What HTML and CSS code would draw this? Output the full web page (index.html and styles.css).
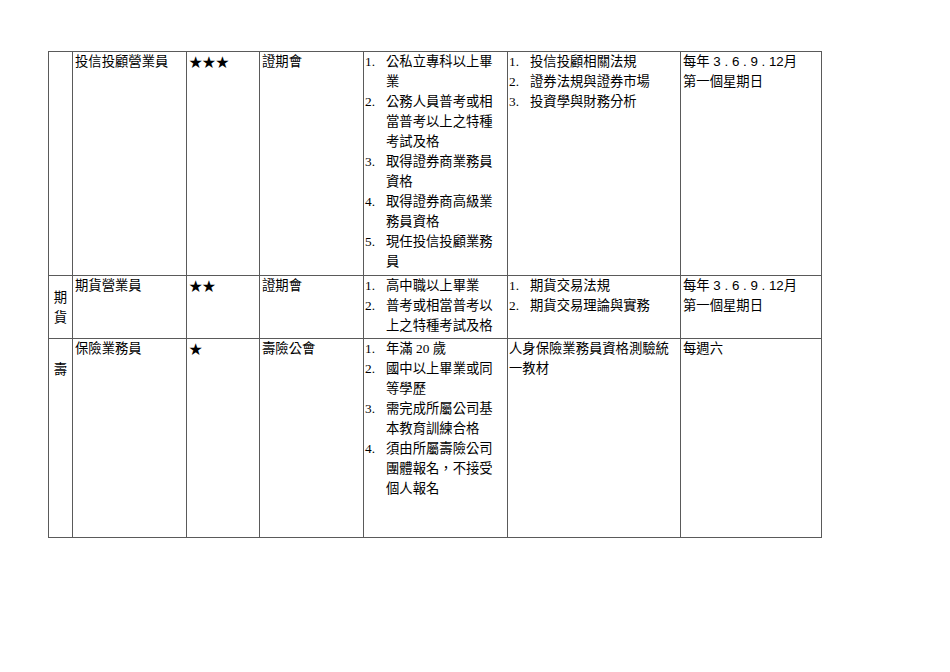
FILE: index.html
```html
<!DOCTYPE html>
<html lang="zh-Hant">
<head>
<meta charset="utf-8">
<title>證照一覽</title>
<link rel="stylesheet" href="styles.css">
</head>
<body>
<div class="page">
  <table class="grid">
    <colgroup>
      <col class="c-cat">
      <col class="c-name">
      <col class="c-star">
      <col class="c-org">
      <col class="c-req">
      <col class="c-subj">
      <col class="c-date">
    </colgroup>
    <tbody>
      <tr class="r1">
        <td class="cat"></td>
        <td class="cell">投信投顧營業員</td>
        <td class="cell stars">★★★</td>
        <td class="cell">證期會</td>
        <td class="cell list">
          <div class="item"><span class="n">1.</span><span class="t">公私立專科以上畢業</span></div>
          <div class="item"><span class="n">2.</span><span class="t">公務人員普考或相當普考以上之特種考試及格</span></div>
          <div class="item"><span class="n">3.</span><span class="t">取得證券商業務員資格</span></div>
          <div class="item"><span class="n">4.</span><span class="t">取得證券商高級業務員資格</span></div>
          <div class="item"><span class="n">5.</span><span class="t">現任投信投顧業務員</span></div>
        </td>
        <td class="cell list">
          <div class="item"><span class="n">1.</span><span class="t">投信投顧相關法規</span></div>
          <div class="item"><span class="n">2.</span><span class="t">證券法規與證券市場</span></div>
          <div class="item"><span class="n">3.</span><span class="t">投資學與財務分析</span></div>
        </td>
        <td class="cell date">每年<span class="num"> 3 . 6 . 9 . 12</span>月<br>第一個星期日</td>
      </tr>
      <tr class="r2">
        <td class="cat mid">期<br>貨</td>
        <td class="cell">期貨營業員</td>
        <td class="cell stars">★★</td>
        <td class="cell">證期會</td>
        <td class="cell list">
          <div class="item"><span class="n">1.</span><span class="t">高中職以上畢業</span></div>
          <div class="item"><span class="n">2.</span><span class="t">普考或相當普考以上之特種考試及格</span></div>
        </td>
        <td class="cell list">
          <div class="item"><span class="n">1.</span><span class="t">期貨交易法規</span></div>
          <div class="item"><span class="n">2.</span><span class="t">期貨交易理論與實務</span></div>
        </td>
        <td class="cell date">每年<span class="num"> 3 . 6 . 9 . 12</span>月<br>第一個星期日</td>
      </tr>
      <tr class="r3">
        <td class="cat low">壽</td>
        <td class="cell">保險業務員</td>
        <td class="cell stars">★</td>
        <td class="cell">壽險公會</td>
        <td class="cell list">
          <div class="item"><span class="n">1.</span><span class="t">年滿 20 歲</span></div>
          <div class="item"><span class="n">2.</span><span class="t">國中以上畢業或同等學歷</span></div>
          <div class="item"><span class="n">3.</span><span class="t">需完成所屬公司基本教育訓練合格</span></div>
          <div class="item"><span class="n">4.</span><span class="t">須由所屬壽險公司團體報名，不接受個人報名</span></div>
        </td>
        <td class="cell plain">人身保險業務員資格測驗統一教材</td>
        <td class="cell date">每週六</td>
      </tr>
    </tbody>
  </table>
</div>
</body>
</html>
```

FILE: styles.css
```css
html, body {
  margin: 0;
  padding: 0;
  background: #ffffff;
}

.page {
  padding: 51px 0 0 48px;
}

.grid {
  border-collapse: collapse;
  table-layout: fixed;
  width: 774px;
  font-family: "Liberation Serif", "Noto Sans CJK TC", serif;
  font-size: 13.33px;
  line-height: 20px;
  color: #000;
}

.c-cat { width: 24px; }
.c-name { width: 114px; }
.c-star { width: 73px; }
.c-org { width: 104px; }
.c-req { width: 144px; }
.c-subj { width: 173px; }
.c-date { width: 141px; }

.grid td {
  border: 1px solid #5a5a5a;
  vertical-align: top;
  padding: 0 2px 2px 2px;
  overflow: hidden;
}

.r1 td { height: 221px; }
.r2 td { height: 60px; }
.r3 td { height: 196px; }

.cat {
  text-align: center;
  font-family: "Noto Sans CJK TC", sans-serif;
}

.grid td.mid {
  vertical-align: middle;
  padding: 0;
}

.grid .r3 td.low {
  padding: 20px 0 0 0;
  height: 178px;
}

.cell {
  font-family: "Liberation Serif", "Noto Sans CJK TC", serif;
}

.grid td.stars {
  font-family: "Noto Sans CJK TC", sans-serif;
  padding-left: 2px;
}

.grid td.list {
  padding-left: 1px;
  padding-right: 4px;
}

.item {
  display: flex;
}

.n {
  flex: 0 0 21px;
  width: 21px;
}

.t {
  flex: 1 1 auto;
  min-width: 0;
}

.grid td.plain {
  padding-left: 1px;
}

.grid td.date {
  padding-left: 2px;
}

.num {
  font-family: "Liberation Sans", sans-serif;
}
```
